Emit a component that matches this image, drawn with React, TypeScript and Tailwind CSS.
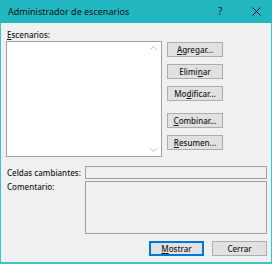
import React from 'react';

const font = { fontFamily: '"Noto Sans", "Open Sans", sans-serif' };

const Mn: React.FC<{ children: React.ReactNode }> = ({ children }) => (
  <span className="underline underline-offset-1">{children}</span>
);

const DlgButton: React.FC<{ children: React.ReactNode; primary?: boolean; className?: string }> = ({
  children,
  primary,
  className = '',
}) => (
  <button
    className={`h-[15px] flex items-center justify-center text-[8px] font-medium leading-none text-[#1a1a1a] bg-[#e1e1e1] border ${primary ? 'border-[#0078d7]' : 'border-[#adadad]'} ${className}`}
  >
    {children}
  </button>
);

const App: React.FC = () => {
  return (
    <div style={font} className="w-[272px] h-[265px] bg-white">
      <div className="w-[272px] h-[264px] flex flex-col bg-[#f0f0f0] border-x border-b-2 border-[#3fc1c9]">
        {/* Title bar */}
        <div className="h-[23px] -mx-px bg-[#22b6c1] flex items-center pl-[8px] text-[9px] text-[#111]">
          <span className="flex-1">Administrador de escenarios</span>
          <span className="w-[10px] text-[10px] mr-[24px]">?</span>
          <svg width="9" height="9" viewBox="0 0 9 9" className="mr-[11px]">
            <path d="M0.5 0.5L8.5 8.5M8.5 0.5L0.5 8.5" stroke="#111" strokeWidth="1" />
          </svg>
        </div>

        <div className="flex-1 flex flex-col pl-[5px] pr-[4px] text-[8px] font-medium text-[#1a1a1a]">
          <div className="h-[18px] flex items-end pl-[1px] pb-[2px] leading-none">
            <span>
              <Mn>E</Mn>scenarios:
            </span>
          </div>

          <div className="flex">
            {/* List box */}
            <div className="w-[156px] h-[116px] bg-white border border-[#a0a0a0] flex justify-end">
              <div className="w-[12px] flex flex-col justify-between items-center py-[4px] mr-[2px]">
                <svg width="7" height="4" viewBox="0 0 7 4">
                  <path d="M0.5 3.5L3.5 0.5L6.5 3.5" stroke="#c0c0c0" fill="none" />
                </svg>
                <svg width="7" height="4" viewBox="0 0 7 4">
                  <path d="M0.5 0.5L3.5 3.5L6.5 0.5" stroke="#c0c0c0" fill="none" />
                </svg>
              </div>
            </div>

            {/* Side buttons */}
            <div className="ml-[5px] w-[56px] flex flex-col gap-[7px] pt-[1px]">
              <DlgButton>
                <Mn>A</Mn>gregar...
              </DlgButton>
              <DlgButton>
                Elimi<Mn>n</Mn>ar
              </DlgButton>
              <DlgButton>
                Mo<Mn>d</Mn>ificar...
              </DlgButton>
              <DlgButton className="mt-[5px]">
                <Mn>C</Mn>ombinar...
              </DlgButton>
              <DlgButton>
                <Mn>R</Mn>esumen...
              </DlgButton>
            </div>
          </div>

          {/* Fields */}
          <div className="mt-[9px] flex items-center">
            <span className="w-[79px] pl-[1px] leading-none whitespace-nowrap">Celdas cambiantes:</span>
            <div className="flex-1 h-[13px] border border-[#a0a0a0] bg-[#f0f0f0]" />
          </div>
          <div className="mt-[2px] flex">
            <span className="w-[79px] pl-[1px] pt-[2px] leading-none whitespace-nowrap">Comentario:</span>
            <div className="flex-1 h-[53px] border border-[#a0a0a0] bg-[#f0f0f0]" />
          </div>

          {/* Bottom buttons */}
          <div className="mt-[7px] flex justify-end gap-[8px]">
            <DlgButton primary className="w-[55px] border-2">
              <Mn>M</Mn>ostrar
            </DlgButton>
            <DlgButton className="w-[55px]">Cerrar</DlgButton>
          </div>
        </div>
      </div>
    </div>
  );
};

export default App;
